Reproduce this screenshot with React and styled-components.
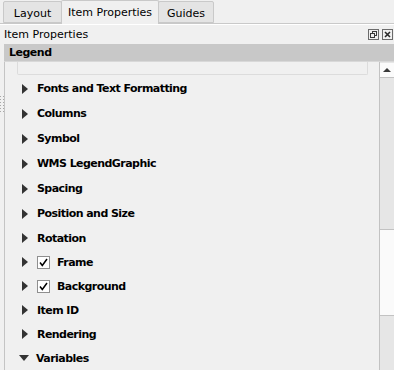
import React from "react";
import styled, { createGlobalStyle } from "styled-components";

const GlobalStyle = createGlobalStyle`
  html, body {
    margin: 0;
    padding: 0;
    background: #f0f0f0;
  }
`;

const Container = styled.div`
  width: 394px;
  height: 370px;
  overflow: hidden;
  background: #f0f0f0;
  font-family: "DejaVu Sans", Verdana, sans-serif;
  font-size: 11px;
  color: #000;
  display: flex;
  flex-direction: column;
`;

const TabBar = styled.div`
  height: 23px;
  flex: none;
  display: flex;
  align-items: flex-end;
  padding-left: 3px;
  border-bottom: 1px solid #c9c9c9;
  box-shadow: 0 1px 0 #ffffff;
`;

const Tab = styled.div`
  box-sizing: border-box;
  width: ${(p) => p.w}px;
  height: ${(p) => (p.active ? "24px" : "22px")};
  margin: 0 ${(p) => (p.active ? "-1px" : "0")} ${(p) => (p.active ? "-1px" : "0")};
  padding-top: ${(p) => (p.active ? "0" : "2px")};
  display: flex;
  align-items: center;
  justify-content: center;
  white-space: nowrap;
  background: ${(p) => (p.active ? "#f0f0f0" : "#e4e4e4")};
  border: 1px solid #c9c9c9;
  border-bottom: ${(p) => (p.active ? "none" : "1px solid #c9c9c9")};
  border-radius: 2px 2px 0 0;
  position: relative;
  z-index: ${(p) => (p.active ? 1 : 0)};
`;

const DockTitle = styled.div`
  height: 19px;
  flex: none;
  display: flex;
  align-items: center;
  justify-content: space-between;
  padding: 1px 1px 0 4px;
`;

const TitleButtons = styled.div`
  display: flex;
  gap: 3px;
`;

const TitleButton = styled.div`
  width: 11px;
  height: 11px;
  display: flex;
  align-items: center;
  justify-content: center;
`;

const SectionHeader = styled.div`
  height: 17px;
  flex: none;
  margin-left: 4px;
  padding-left: 5px;
  background: #c8c8c8;
  display: flex;
  align-items: center;
  font-weight: bold;
  letter-spacing: -0.5px;
  border-bottom: 1px solid #d8d8d8;
`;

const Body = styled.div`
  flex: 1;
  display: flex;
  min-height: 0;
`;

const Grip = styled.div`
  width: 4px;
  flex: none;
  align-self: flex-start;
  margin-top: 33px;
  height: 17px;
  background-image: radial-gradient(circle, #a8a8a8 0.6px, transparent 0.8px);
  background-size: 3px 3px;
  background-position: -1px 0;
`;

const ScrollArea = styled.div`
  flex: 1;
  border-left: 1px solid #c4c4c4;
  display: flex;
  flex-direction: column;
  overflow: hidden;
`;

const GroupEdge = styled.div`
  flex: none;
  height: ${(p) => p.h}px;
  margin: 0 11px 0 12px;
  box-sizing: border-box;
  border: 1px solid #dcdcdc;
  border-top: ${(p) => (p.top ? "1px solid #dcdcdc" : "none")};
  border-bottom: ${(p) => (p.top ? "none" : "1px solid #dcdcdc")};
  border-radius: ${(p) => (p.top ? "2px 2px 0 0" : "0 0 2px 2px")};
`;

const Rows = styled.div`
  padding-top: 1px;
  display: flex;
  flex-direction: column;
`;

const Row = styled.div`
  height: ${(p) => p.h}px;
  display: flex;
  align-items: center;
  padding-left: ${(p) => (p.down ? "14px" : "16px")};
  font-weight: bold;
  letter-spacing: -0.55px;
  white-space: nowrap;
`;

const Arrow = styled.span`
  width: 0;
  height: 0;
  flex: none;
  border-style: solid;
  border-color: transparent;
  ${(p) =>
    p.down
      ? `border-width: 6px 5.5px 0 5.5px; border-top-color: #333; margin-right: 7px;`
      : `border-width: 5.5px 0 5.5px 6px; border-left-color: #333; margin: 0 9px 0 1px;`}
`;

const Check = styled.span`
  width: 13px;
  height: 13px;
  box-sizing: border-box;
  border: 1px solid #8f8f8f;
  background: #fff;
  margin-right: 7px;
  display: flex;
  align-items: center;
  justify-content: center;
  flex: none;
`;

const Scrollbar = styled.div`
  width: 15px;
  flex: none;
  display: flex;
  flex-direction: column;
  background: #e6e6e6;
  border-left: 1px solid #c2c2c2;
  box-sizing: border-box;
`;

const ScrollButton = styled.div`
  height: 14px;
  flex: none;
  background: #fbfbfb;
  border-bottom: 1px solid #c2c2c2;
  display: flex;
  align-items: center;
  justify-content: center;
  margin-top: 1px;
`;

const Track = styled.div`
  flex: 1;
  padding-top: 151px;
`;

const Thumb = styled.div`
  height: 85px;
  background: #fafafa;
  border-top: 1px solid #c2c2c2;
  border-bottom: 1px solid #c2c2c2;
`;

const FloatIcon = () => (
  <svg width="11" height="11" viewBox="0 0 11 11">
    <rect x="0.5" y="0.5" width="10" height="10" fill="none" stroke="#6b6b6b" />
    <rect x="4.5" y="2.5" width="4" height="4" fill="none" stroke="#3a3a3a" />
    <rect x="2.5" y="4.5" width="4" height="4" fill="#f0f0f0" stroke="#3a3a3a" />
  </svg>
);

const CloseIcon = () => (
  <svg width="11" height="11" viewBox="0 0 11 11">
    <rect x="0.5" y="0.5" width="10" height="10" fill="none" stroke="#6b6b6b" />
    <path d="M3 3 L8 8 M8 3 L3 8" stroke="#2a2a2a" strokeWidth="1.6" />
  </svg>
);

const CheckMark = () => (
  <svg width="11" height="11" viewBox="0 0 11 11">
    <path d="M2 5.5 L4.3 8.5 L9 2" fill="none" stroke="#000" strokeWidth="1.5" />
  </svg>
);

const UpArrow = () => (
  <svg width="8" height="4" viewBox="0 0 8 4">
    <path d="M0 4 L4 0 L8 4 Z" fill="#3a3a3a" />
  </svg>
);

const items = [
  { label: "Fonts and Text Formatting", h: 25 },
  { label: "Columns", h: 25 },
  { label: "Symbol", h: 25 },
  { label: "WMS LegendGraphic", h: 25 },
  { label: "Spacing", h: 25 },
  { label: "Position and Size", h: 25 },
  { label: "Rotation", h: 24 },
  { label: "Frame", h: 24, check: true },
  { label: "Background", h: 24, check: true },
  { label: "Item ID", h: 24 },
  { label: "Rendering", h: 24 },
  { label: "Variables", h: 24, down: true },
];

export default function App() {
  return (
    <Container>
      <GlobalStyle />
      <TabBar>
        <Tab w={59}>Layout</Tab>
        <Tab active w={98}>Item Properties</Tab>
        <Tab w={56}>Guides</Tab>
      </TabBar>
      <DockTitle>
        <span>Item Properties</span>
        <TitleButtons>
          <TitleButton><FloatIcon /></TitleButton>
          <TitleButton><CloseIcon /></TitleButton>
        </TitleButtons>
      </DockTitle>
      <SectionHeader>Legend</SectionHeader>
      <Body>
        <Grip />
        <ScrollArea>
          <GroupEdge h={13} />
          <Rows>
            {items.map((it) => (
              <Row key={it.label} h={it.h} down={it.down}>
                <Arrow down={it.down} />
                {it.check && (
                  <Check>
                    <CheckMark />
                  </Check>
                )}
                {it.label}
              </Row>
            ))}
          </Rows>
          <GroupEdge h={10} top />
        </ScrollArea>
        <Scrollbar>
          <ScrollButton>
            <UpArrow />
          </ScrollButton>
          <Track>
            <Thumb />
          </Track>
        </Scrollbar>
      </Body>
    </Container>
  );
}
